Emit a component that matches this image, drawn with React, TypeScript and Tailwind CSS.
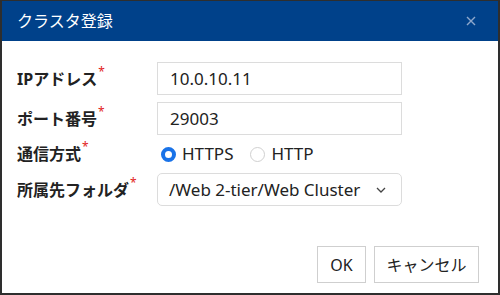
const font = { fontFamily: '"Noto Sans", "Noto Sans CJK JP", sans-serif' };

const Req = () => <span className="text-[#e2231a] text-[12px] relative -top-[7px] ml-px font-normal">*</span>;

const Label = ({ children }: { children: string }) => (
  <div className="flex items-center text-[16px] font-bold text-[#222]">
    {children}
    <Req />
  </div>
);

const App = () => {
  return (
    <div className="w-[500px] h-[295px] bg-[#2e2e2e] pt-px px-[2px] pb-[2px]" style={font}>
      <div className="bg-white h-full flex flex-col">
        {/* header */}
        <div className="h-[40px] bg-[#00418a] flex items-center justify-between pl-[15px] pr-[22px]">
          <span className="text-white text-[16px] leading-none">クラスタ登録</span>
          <svg width="10" height="10" viewBox="0 0 10 10" className="text-[#8ea8cc]">
            <path d="M1 1L9 9M9 1L1 9" stroke="currentColor" strokeWidth="1.4" />
          </svg>
        </div>

        {/* form */}
        <div className="grid grid-cols-[140px_245px] pl-[15px] pt-[21px] gap-y-[7px]">
          <Label>IPアドレス</Label>
          <div className="h-[33px] border border-[#dcdcdc] flex items-center px-[12px] text-[17px] text-[#222]">10.0.10.11</div>

          <Label>ポート番号</Label>
          <div className="h-[33px] border border-[#dcdcdc] flex items-center px-[12px] text-[17px] text-[#222]">29003</div>

          <Label>通信方式</Label>
          <div className="h-[24px] flex items-center text-[17px] text-[#222]">
            <span className="w-[15px] h-[15px] rounded-full border-[4px] border-[#1a73e8] ml-[4px]" />
            <span className="ml-[6px]">HTTPS</span>
            <span className="w-[15px] h-[15px] rounded-full border border-[#d0d0d0] ml-[17px]" />
            <span className="ml-[6px]">HTTP</span>
          </div>

          <Label>所属先フォルダ</Label>
          <div className="h-[33px] border border-[#dcdcdc] rounded-[5px] flex items-center justify-between pl-[11px] pr-[15px] text-[17px] text-[#222]">
            <span>/Web 2-tier/Web Cluster</span>
            <svg width="10" height="6" viewBox="0 0 10 6">
              <path d="M1 1L5 5L9 1" fill="none" stroke="#444" strokeWidth="1.3" />
            </svg>
          </div>
        </div>

        {/* buttons */}
        <div className="mt-auto flex justify-end gap-[8px] pr-[19px] pb-[10px]">
          <button className="h-[37px] w-[49px] border border-[#cfcfcf] text-[16px] text-[#222]">OK</button>
          <button className="h-[37px] w-[105px] border border-[#cfcfcf] text-[16px] text-[#222]">キャンセル</button>
        </div>
      </div>
    </div>
  );
};

export default App;
